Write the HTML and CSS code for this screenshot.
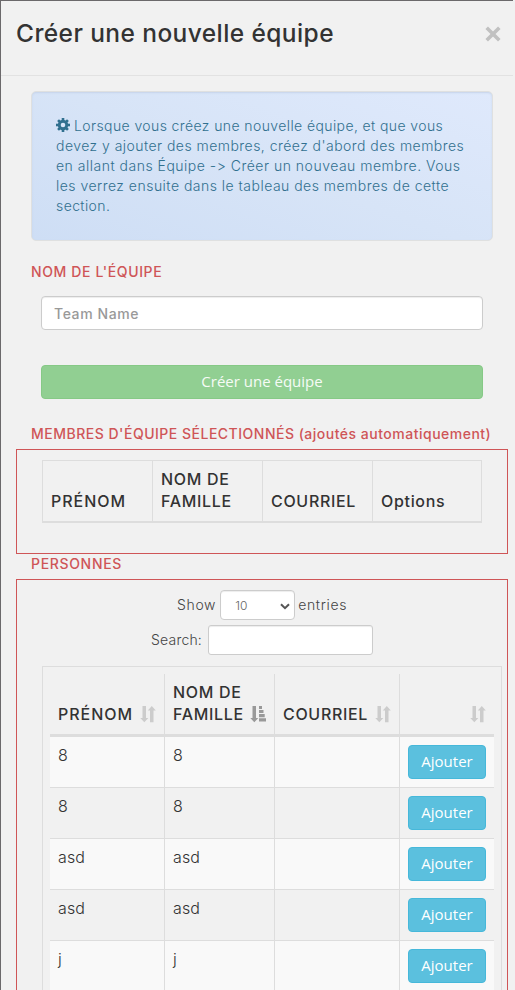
FILE: index.html
```
<!DOCTYPE html>
<html lang="fr">
<head>
<meta charset="utf-8">
<title>Créer une nouvelle équipe</title>
<link rel="stylesheet" href="styles.css">
</head>
<body>
<svg width="0" height="0" class="defs">
  <defs>
    <g id="both"><path d="M2.500 0h3.500v12h2.300L4.300 16.300.3 12h2.200z"/><path d="M10 16.300V4.500H7.800L11.800 0l4 4.500h-2.300v11.800z"/></g>
    <g id="asc"><path d="M2.500 0h3.500v12h2.300L4.300 16.300.3 12h2.200z"/><path d="M9 0h3v3H9zM9 4h4.500v3H9zM9 8h5.700v3.200H9zM9 12.200h7v3.300H9z"/></g>
  </defs>
</svg>
<div class="modal">
  <header class="head">
    <h1>Créer une nouvelle équipe</h1>
    <svg class="close" width="16" height="16" viewBox="0 0 16 16"><path d="M1.700 1.700l12.600 12.600M14.300 1.700L1.700 14.300"/></svg>
  </header>
  <main>
    <div class="alert">
      <p><svg class="gear" width="14" height="14" viewBox="0 0 14 14"><g fill="currentColor"><rect x="5.700" y="0" width="2.600" height="14"/><rect x="5.700" y="0" width="2.600" height="14" transform="rotate(45 7 7)"/><rect x="5.700" y="0" width="2.600" height="14" transform="rotate(90 7 7)"/><rect x="5.700" y="0" width="2.600" height="14" transform="rotate(135 7 7)"/><circle cx="7" cy="7" r="5.200"/></g><circle cx="7" cy="7" r="2.300" fill="#d8e5f8"/></svg><span class="l1">Lorsque vous créez une nouvelle équipe, et que vous</span></p>
      <p class="l2">devez y ajouter des membres, créez d'abord des membres</p>
      <p class="l3">en allant dans Équipe -&gt; Créer un nouveau membre. Vous</p>
      <p class="l4">les verrez ensuite dans le tableau des membres de cette</p>
      <p class="l5">section.</p>
    </div>
    <label class="title name">NOM DE L'ÉQUIPE</label>
    <input class="field team" type="text" placeholder="Team Name">
    <button class="create">Créer une équipe</button>
    <div class="title members">MEMBRES D'ÉQUIPE SÉLECTIONNÉS (ajoutés automatiquement)</div>
    <section class="box selected">
      <table class="chosen">
        <thead><tr><th class="c1">PRÉNOM</th><th>NOM DE<br>FAMILLE</th><th>COURRIEL</th><th>Options</th></tr></thead>
      </table>
    </section>
    <div class="title people">PERSONNES</div>
    <section class="box persons">
      <div class="length"><span>Show</span><span class="field select">10<svg width="10" height="7" viewBox="0 0 10 7"><path d="M1 1.200l4 4 4-4"/></svg></span><span>entries</span></div>
      <div class="search"><span>Search:</span><input class="field" type="text"></div>
      <div class="frame">
        <table class="data">
          <colgroup><col class="w1"><col class="w2"><col class="w3"><col class="w4"></colgroup>
          <thead><tr>
            <th class="c1">PRÉNOM<svg class="sort" viewBox="0 0 16 17"><use href="#both"/></svg></th>
            <th>NOM DE<br>FAMILLE<svg class="sort on" viewBox="0 0 16 17"><use href="#asc"/></svg></th>
            <th>COURRIEL<svg class="sort" viewBox="0 0 16 17"><use href="#both"/></svg></th>
            <th><svg class="sort" viewBox="0 0 16 17"><use href="#both"/></svg></th>
          </tr></thead>
          <tbody>
            <tr><td>8</td><td>8</td><td></td><td><button class="add">Ajouter</button></td></tr>
            <tr><td>8</td><td>8</td><td></td><td><button class="add">Ajouter</button></td></tr>
            <tr><td>asd</td><td>asd</td><td></td><td><button class="add">Ajouter</button></td></tr>
            <tr><td>asd</td><td>asd</td><td></td><td><button class="add">Ajouter</button></td></tr>
            <tr><td>j</td><td>j</td><td></td><td><button class="add">Ajouter</button></td></tr>
          </tbody>
        </table>
      </div>
    </section>
  </main>
</div>
</body>
</html>
```
FILE: styles.css
```
* { box-sizing: border-box; }
html, body { margin: 0; height: 990px; overflow: hidden; }
body { background: #f1f1f1; font: 300 14px/20px Inter, "Open Sans", sans-serif; color: #333; }
.defs { display: block; height: 0; }
.modal { width: 513px; height: 990px; border: solid #6b696b; border-width: 1px 0 0 1px; overflow: hidden; }
.head { height: 75px; border-bottom: 1px solid #e2e2e2; padding: 15px 12px 0 15px; display: flex; justify-content: space-between; }
h1 { margin: 0; font-size: 24.5px; line-height: 34px; font-weight: 500; letter-spacing: .41px; white-space: nowrap; }
.close { margin-top: 10px; fill: none; stroke: #c1c1c1; stroke-width: 3.6; }
main { padding: 15px 5px 0 15px; }
.alert { margin: 0 15px; width: 462px; height: 150px; padding: 24px; border: 1px solid #dfe0e0; border-radius: 5px; color: #31708f; white-space: nowrap;
  background: linear-gradient(20deg, #cedef5, #d7e4f7 50%, #dfe9fc); box-shadow: inset 0 1px 2px #c5d3ea; }
.alert p { margin: 0; height: 20px; }
.gear { vertical-align: -1px; margin-right: 4px; }
.l1 { letter-spacing: .4px; }
.l2 { letter-spacing: .46px; }
.l3 { letter-spacing: .5px; }
.l4 { letter-spacing: .48px; }
.l5 { letter-spacing: .4px; }
.title { display: block; margin-left: 15px; color: #cf5557; font-weight: 500; letter-spacing: .62px; white-space: nowrap; height: 20px; }
.name { margin-top: 21px; }
.members { margin-top: 25px; letter-spacing: .5px; }
.people { letter-spacing: .67px; margin-top: 0; }
.field { display: block; background: #fff; border: 1px solid #ccc; border-radius: 4px; box-shadow: inset 0 1px 1px rgba(0,0,0,.075); font: 400 14px Inter, sans-serif; }
.team { margin: 14px 0 0 25px; width: 442px; height: 34px; padding: 0 12px; font-weight: 500; letter-spacing: .6px; }
.team::placeholder { color: #999; opacity: 1; }
.create { display: block; margin: 35px 0 0 25px; width: 442px; height: 34px; padding: 0 0 2px; border: 1px solid #86c986; border-radius: 4px; background: #91cf92; color: #f6fbf6; font: 400 15px "Open Sans", sans-serif; }
.box { width: 492px; border: 1px solid #cf5557; }
.selected { margin-top: 5px; height: 105px; padding: 10px 25px; }
table { border-spacing: 0; border-collapse: separate; table-layout: fixed; }
th { font-size: 16px; line-height: 22px; font-weight: 500; letter-spacing: .68px; text-align: left; vertical-align: bottom; padding: 8px; white-space: nowrap; }
th.c1 { letter-spacing: .98px; }
.chosen { width: 440px; height: 63px; }
.chosen th { width: 110px; padding: 7px 8px 9px; border: solid #ddd; border-width: 1px 0 2px 1px; }
.chosen th:last-child { border-right-width: 1px; }
.persons { margin-top: 5px; height: 430px; padding: 10px 5px 0 25px; }
.length, .search { display: flex; align-items: center; height: 30px; color: #444; }
.length { padding-left: 135px; letter-spacing: .65px; }
.select { width: 75px; height: 30px; margin: 0 3px 0 4px; padding: 6px 4px 0 14px; display: flex; justify-content: space-between; align-items: flex-start; color: #666; font-size: 12px; line-height: 17px; font-weight: 300; letter-spacing: .2px; }
.select svg { margin: 6px 0 0; fill: none; stroke: #555; stroke-width: 2; }
.search { margin-top: 5px; padding-left: 109px; letter-spacing: .2px; }
.search .field { width: 165px; height: 30px; margin-left: 6px; border-radius: 3px; }
.frame { margin-top: 11px; width: 460px; height: 340px; border: 1px solid #ddd; padding: 7px; }
.data { width: 444px; }
.w1 { width: 114px; }
.w2 { width: 110px; }
.w3 { width: 125px; }
.w4 { width: 95px; }
.data th { position: relative; height: 63px; padding: 7px 8px 9px; border-bottom: 3px solid #ddd; }
.data th + th, .data td + td { border-left: 1px solid #ddd; }
.sort { position: absolute; right: 8px; bottom: 11px; width: 16px; height: 17px; fill: #ccc; }
.sort.on { fill: #999; }
td { height: 51px; padding: 7px 8px 8px; vertical-align: top; font-size: 16px; line-height: 22px; letter-spacing: .15px; border-bottom: 1px solid #ddd; }
td:last-child { padding-top: 8px; }
tbody tr:nth-child(odd) { background: #f9f9f9; }
.add { display: block; width: 78px; height: 34px; padding: 0 0 2px; border: 1px solid #46b8da; border-radius: 4px; background: #5bc0de; color: #fff; font: 400 15px "Open Sans", sans-serif; }
```
